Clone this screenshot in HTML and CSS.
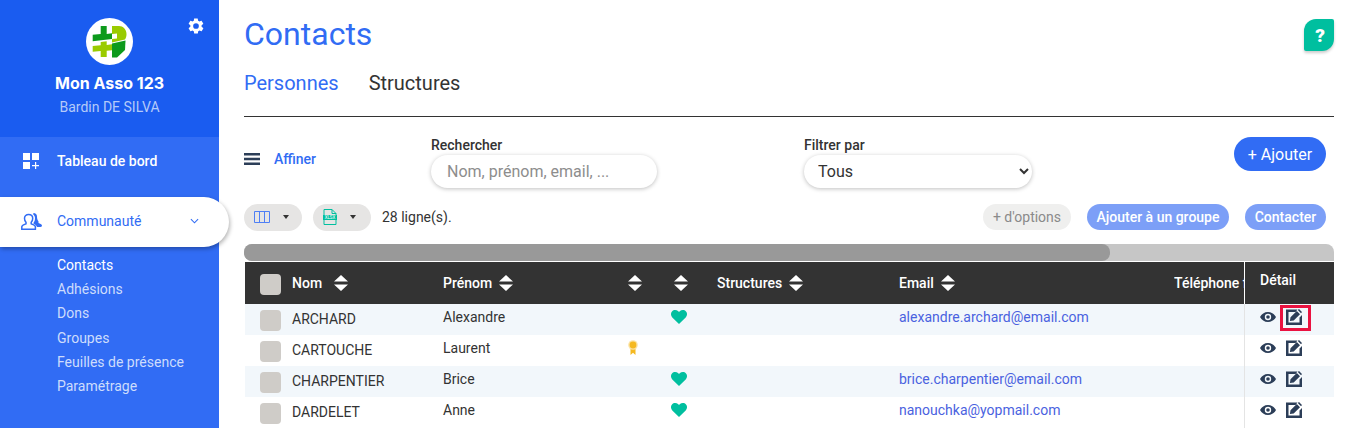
FILE: index.html
```html
<!DOCTYPE html>
<html lang="fr">
<head>
<meta charset="utf-8">
<title>Contacts</title>
<link rel="stylesheet" href="styles.css">
</head>
<body>
<svg class="defs" width="0" height="0" aria-hidden="true">
  <symbol id="sort" viewBox="0 0 14 16"><path d="M7 0l7 6.600H0zM7 16L0 9.400h14z" fill="currentColor"/></symbol>
  <symbol id="heart" viewBox="0 0 16 14"><path d="M8 14L1.300 7.400C-.4 5.600-.4 3 1 1.400 2.600-.4 5.400-.4 7 1.100l1 1 1-1c1.600-1.500 4.400-1.500 6 .3 1.400 1.600 1.400 4.200-.3 6z" fill="#00bf9f"/></symbol>
  <symbol id="eye" viewBox="0 0 16 12"><path fill-rule="evenodd" d="M8 1C4.400 1 1.500 3.100 0 6c1.500 2.900 4.400 5 8 5s6.500-2.100 8-5c-1.500-2.900-4.400-5-8-5zm0 8.200A3.200 3.200 0 1 1 8 2.800a3.200 3.200 0 0 1 0 6.400zM8 4.200a1.800 1.800 0 1 0 0 3.600 1.800 1.800 0 0 0 0-3.600z" fill="#2c3e58"/></symbol>
  <symbol id="edit" viewBox="0 0 16 16"><path d="M0 .5h11.500L9.500 3H2.500v10.500h11V8.500L16 6v10H0z" fill="#2c3e58"/><path d="M4.500 8.300L10.800 2l3.200 3.200-6.300 6.300-3.800.6zM11.800 1L13 0l3 3-1 1.200z" fill="#2c3e58"/></symbol>
</svg>
<div class="app">
  <aside class="sidebar">
    <header class="brand">
      <div class="logo">
        <svg viewBox="0 0 47 47" width="47" height="47">
          <circle cx="23.500" cy="23.500" r="23.500" fill="#fff"/>
          <path d="M14.700 8h6v8l5.300-.8V21l-19.300 2.300v-6.500l8-.8z" fill="#0d9a1c"/>
          <path d="M26 8h7c4 0 7.500 3.500 7.500 8 0 2-.5 4-1.500 5.500l-13 3V21l5-.6v-5l-5 .5z" fill="#9acb00"/>
          <path d="M26 25.500l13.500-3-.5 9.500-8 7.500h-5z" fill="#0d9a1c"/>
          <path d="M14.700 24l6-.7V27l5.300-.8v6l-5.300.5V39h-6v-6l-8 .7V28l8-.8z" fill="#9acb00"/>
        </svg>
      </div>
      <svg class="gear" viewBox="0 0 24 24" width="18" height="18"><path d="M19.400 13c.1-.3.100-.7.100-1s0-.7-.1-1l2.100-1.600c.2-.2.200-.4.100-.6l-2-3.500c-.1-.2-.4-.3-.6-.2l-2.500 1c-.5-.4-1.100-.7-1.700-1l-.4-2.600c0-.3-.2-.5-.5-.5h-4c-.3 0-.5.200-.5.400L9.100 5c-.6.300-1.200.6-1.700 1l-2.500-1c-.2-.1-.5 0-.6.200l-2 3.500c-.1.200-.1.500.1.600L4.500 11c0 .3-.1.700-.1 1s0 .7.1 1l-2.100 1.600c-.2.200-.2.400-.1.600l2 3.500c.1.200.4.300.6.200l2.500-1c.5.400 1.100.7 1.700 1l.4 2.600c0 .2.200.4.500.4h4c.3 0 .5-.2.500-.4l.4-2.600c.6-.3 1.200-.6 1.700-1l2.500 1c.2.100.5 0 .6-.2l2-3.500c.1-.2.100-.5-.1-.6zM12 15.800a3.800 3.800 0 1 1 0-7.600 3.800 3.800 0 0 1 0 7.600z" fill="#fff"/></svg>
      <div class="asso">Mon Asso 123</div>
      <div class="user">Bardin DE SILVA</div>
    </header>
    <nav class="nav">
      <a class="nav-item">
        <svg viewBox="0 0 16 16" width="16" height="16"><path d="M0 0h7v7H0zM9 0h7v7H9zM0 9h7v7H0zM12 9h1.200v3H16v1.200h-2.800V16H12v-2.800H9V12h3z" fill="#fff"/></svg>
        <span>Tableau de bord</span>
      </a>
      <a class="nav-item active">
        <svg viewBox="0 0 21 17" width="21" height="17"><path d="M.8 16.200v-2.400c0-1.600 2.800-2.400 4.200-3V9.300C3.900 8.300 3.500 6.800 3.500 5.200 3.500 3 5.200 1.400 7.600 1.400s4.100 1.600 4.100 3.800c0 1.600-.4 3.100-1.500 4.100v1.500c1.400.6 4.200 1.400 4.200 3v2.400z" fill="none" stroke="#316cf4" stroke-width="1.500"/><path d="M12.500 0c2 0 3.500 1.500 3.500 3.500 0 1.700.3 3.500 1.500 5V10c1.500.5 3 1 3.500 2.500 0 .7-.5 1.500-1.500 1.500h-3.500c-.5-1.700-2-2.700-3.500-3.300V9.800c1-1.100 1.500-2.800 1.500-4.700 0-1.700-1-3.200-2.200-4.100.4-.6 1.100-1 1.700-1z" fill="#316cf4"/></svg>
        <span>Communauté</span>
        <svg class="chev" viewBox="0 0 10 6" width="9" height="6"><path d="M1 1l4 4 4-4" fill="none" stroke="#316cf4" stroke-width="1.200"/></svg>
      </a>
      <ul class="subnav">
        <li class="current">Contacts</li>
        <li>Adhésions</li>
        <li>Dons</li>
        <li>Groupes</li>
        <li>Feuilles de présence</li>
        <li>Paramétrage</li>
      </ul>
    </nav>
  </aside>
  <main class="main">
    <div class="title-row">
      <h1>Contacts</h1>
      <button class="help">?</button>
    </div>
    <div class="tabs">
      <a class="tab on">Personnes</a>
      <a class="tab">Structures</a>
    </div>
    <div class="filters">
      <a class="affiner">
        <svg viewBox="0 0 16 12" width="16" height="12"><path d="M0 0h16v2.400H0zM0 4.800h16v2.400H0zM0 9.600h16V12H0z" fill="#2c3e58"/></svg>
        <span>Affiner</span>
      </a>
      <label class="field search">
        <span>Rechercher</span>
        <input type="text" placeholder="Nom, prénom, email, ...">
      </label>
      <label class="field filter">
        <span>Filtrer par</span>
        <select><option>Tous</option></select>
      </label>
      <button class="add">+ Ajouter</button>
    </div>
    <div class="toolbar">
      <button class="chip">
        <svg viewBox="0 0 16 12" width="16" height="12"><path d="M.5.500h15v11H.5zM5.500.500v11M10.500.500v11" fill="none" stroke="#4f7ff5"/></svg>
        <i class="caret"></i>
      </button>
      <button class="chip">
        <svg viewBox="0 0 14 16" width="14" height="16"><path d="M1 .5h8l4 4v11H1zM9 .5v4h4" fill="none" stroke="#00bf9f"/><rect y="6" width="14" height="5" fill="#00bf9f"/><text x="7" y="10" font-size="4.500" font-family="Roboto, sans-serif" text-anchor="middle" fill="#fff">XLSX</text></svg>
        <i class="caret"></i>
      </button>
      <span class="count">28 ligne(s).</span>
      <div class="actions">
        <button class="pill muted">+ d'options</button>
        <button class="pill light group">Ajouter à un groupe</button>
        <button class="pill light contact">Contacter</button>
      </div>
    </div>
    <div class="scrollbar"><div class="thumb"></div></div>
    <div class="table">
      <div class="row head">
        <div class="cell"><i class="check"></i></div>
        <div class="cell">Nom<svg class="sort wide"><use href="#sort"/></svg></div>
        <div class="cell">Prénom<svg class="sort"><use href="#sort"/></svg></div>
        <div class="cell"><svg class="sort solo"><use href="#sort"/></svg></div>
        <div class="cell"><svg class="sort solo"><use href="#sort"/></svg></div>
        <div class="cell">Structures<svg class="sort"><use href="#sort"/></svg></div>
        <div class="cell">Email<svg class="sort"><use href="#sort"/></svg></div>
        <div class="cell clip">Téléphone fixe</div>
        <div class="cell detail">Détail</div>
      </div>
      <div class="row alt">
        <div class="cell"><i class="check"></i></div>
        <div class="cell low">ARCHARD</div>
        <div class="cell">Alexandre</div>
        <div class="cell"></div>
        <div class="cell"><svg class="heart"><use href="#heart"/></svg></div>
        <div class="cell"></div>
        <div class="cell mail">alexandre.archard@email.com</div>
        <div class="cell"></div>
        <div class="cell detail tools"><svg class="eye"><use href="#eye"/></svg><span class="flag"><svg class="edit"><use href="#edit"/></svg></span></div>
      </div>
      <div class="row">
        <div class="cell"><i class="check"></i></div>
        <div class="cell low">CARTOUCHE</div>
        <div class="cell">Laurent</div>
        <div class="cell">
          <svg class="medal" viewBox="0 0 10 15"><path d="M2.500 8.500h5V15L5 12.800 2.500 15z" fill="#f5b921"/><circle cx="5" cy="5" r="4.800" fill="#fbe3a6"/><circle cx="5" cy="5" r="3.400" fill="#f5b921"/></svg>
        </div>
        <div class="cell"></div>
        <div class="cell"></div>
        <div class="cell mail"></div>
        <div class="cell"></div>
        <div class="cell detail tools"><svg class="eye"><use href="#eye"/></svg><span class="plain"><svg class="edit"><use href="#edit"/></svg></span></div>
      </div>
      <div class="row alt">
        <div class="cell"><i class="check"></i></div>
        <div class="cell low">CHARPENTIER</div>
        <div class="cell">Brice</div>
        <div class="cell"></div>
        <div class="cell"><svg class="heart"><use href="#heart"/></svg></div>
        <div class="cell"></div>
        <div class="cell mail">brice.charpentier@email.com</div>
        <div class="cell"></div>
        <div class="cell detail tools"><svg class="eye"><use href="#eye"/></svg><span class="plain"><svg class="edit"><use href="#edit"/></svg></span></div>
      </div>
      <div class="row">
        <div class="cell"><i class="check"></i></div>
        <div class="cell low">DARDELET</div>
        <div class="cell">Anne</div>
        <div class="cell"></div>
        <div class="cell"><svg class="heart"><use href="#heart"/></svg></div>
        <div class="cell"></div>
        <div class="cell mail">nanouchka@yopmail.com</div>
        <div class="cell"></div>
        <div class="cell detail tools"><svg class="eye"><use href="#eye"/></svg><span class="plain"><svg class="edit"><use href="#edit"/></svg></span></div>
      </div>
    </div>
  </main>
</div>
</body>
</html>
```
FILE: styles.css
```css
* { box-sizing: border-box; }
html, body { margin: 0; height: 428px; overflow: hidden; background: #fff; }
body { font-family: Roboto, "Liberation Sans", sans-serif; color: #333; font-size: 14px; }
.defs { display: block; height: 0; }
button { font-family: inherit; border: 0; cursor: pointer; }

.app { display: flex; height: 428px; }

.sidebar { width: 219px; flex: none; background: #316cf4; color: #fff; }
.brand { position: relative; height: 137px; background: #1a5cf0; display: flex; flex-direction: column; align-items: center; padding-top: 18px; }
.logo { width: 47px; height: 47px; }
.gear { position: absolute; left: 187px; top: 17px; }
.asso { font-family: Inter, sans-serif; font-weight: 700; font-size: 16px; line-height: 20px; margin-top: 8px; }
.user { color: #b4caf9; font-size: 14px; line-height: 18px; margin-top: 5px; }

.nav-item { display: flex; align-items: center; height: 48px; padding-left: 23px; font-size: 14px; }
.nav-item > span { margin-left: 18px; font-weight: 500; }
.nav-item.active { width: 229px; height: 50px; margin-top: 12px; padding-bottom: 2px; background: #fff; color: #316cf4; border-radius: 0 25px 25px 0; padding-left: 21px; box-shadow: 1px 2px 4px rgba(0,0,0,.3); position: relative; }
.nav-item.active > span { margin-left: 15px; font-weight: 400; }
.chev { margin-left: 49px; }
.subnav { list-style: none; margin: 6px 0 0; padding: 0 0 0 57px; color: #cddcfc; font-size: 14px; }
.subnav li { height: 24.200px; line-height: 24px; }
.subnav .current { color: #fff; }

.main { flex: 1; min-width: 0; padding: 0 15px 0 25px; }
.title-row { display: flex; justify-content: space-between; height: 68px; }
h1 { margin: 16px 0 0; font-weight: 400; font-size: 32px; line-height: 37px; color: #316cf4; }
.help { width: 30px; height: 32px; margin: 19px 0 0 0; background: #00bf9f; color: #fff; font-size: 19px; font-weight: 900; border-radius: 12px 2px 12px 2px; box-shadow: 0 2px 3px rgba(0,0,0,.2); padding: 0 0 0 2px; }
.tabs { display: flex; gap: 30px; height: 49px; border-bottom: 1px solid #333; font-size: 20px; line-height: 30px; }
.tab.on { color: #316cf4; }

.filters { display: flex; align-items: flex-start; height: 87px; }
.affiner { display: flex; align-items: center; margin-top: 34px; font-weight: 500; color: #316cf4; width: 187px; font-size: 14px; }
.affiner span { margin-left: 14px; }
.field { display: flex; flex-direction: column; }
.field > span { font-weight: 500; font-size: 14px; line-height: 18px; margin-top: 19px; margin-bottom: 1px; }
.search { width: 373px; }
.search input { width: 226px; height: 33px; border: 0; border-radius: 17px; padding: 0 16px; box-shadow: 0 1px 4px rgba(0,0,0,.25); font: 16px Roboto, sans-serif; color: #333; outline: 0; }
.search input::placeholder { color: #8d8d8d; opacity: 1; }
.filter select { width: 228px; height: 33px; border: 0; border-radius: 17px; padding: 0 10px; background: #fff; box-shadow: 0 1px 4px rgba(0,0,0,.25); font: 16px Roboto, sans-serif; color: #333; outline: 0; }
.filter { width: 430px; }
.add { margin-top: 20px; width: 92px; height: 34px; border-radius: 17px; background: #316cf4; color: #fff; font-size: 16px; padding: 0; flex: none; }

.toolbar { display: flex; align-items: center; height: 26px; }
.chip { width: 58px; height: 27px; border-radius: 14px; background: #e6e5e4; display: flex; align-items: center; padding: 0 0 0 10px; margin-right: 11px; justify-content: flex-start; }
.chip .caret { margin-left: 13px; }
.caret { width: 0; height: 0; border-left: 3px solid transparent; border-right: 3px solid transparent; border-top: 4px solid #333; }
.count { font-size: 14px; }
.actions { margin-left: auto; margin-right: 8px; display: flex; gap: 16px; }
.pill { height: 26px; border-radius: 13px; font-size: 14px; padding: 0; color: #fff; font-weight: 500; }
.pill.light { background: #7c9ff7; }
.pill.group { width: 142px; }
.pill.contact { width: 81px; }
.pill.muted { width: 88px; background: #efefee; color: #8a8a8a; font-weight: 400; }

.scrollbar { margin-top: 14px; height: 17px; border-radius: 8px 8px 0 8px; background: #c6c6c6; }
.thumb { width: 866px; height: 17px; border-radius: 8px; background: #999; }

.table { margin-left: 1px; margin-top: 1px; }
.row { display: grid; grid-template-columns: 47px 151px 182px 46px 46px 182px 275px 70px 90px; height: 31px; align-items: center; }
.row.head { height: 42px; background: #333; color: #fff; font-weight: 500; }
.row.alt { background: #f2f7fb; }
.cell { display: flex; align-items: center; height: 100%; white-space: nowrap; min-width: 0; padding-bottom: 6px; }
.row.head .cell { padding-bottom: 0; }
.cell.low { padding-bottom: 2px; }
.cell:first-child { padding: 2px 0 0 15px; }
.check { display: block; width: 21px; height: 21px; border-radius: 4px; background: #cfccc8; }
.sort { width: 14px; height: 16px; margin-left: 7px; color: #fff; }
.sort.wide { margin-left: 12px; }
.sort.solo { margin-left: 3px; }
.clip { overflow: hidden; }
.detail { border-left: 1px solid #e4e4e4; padding-left: 15px; background: inherit; }
.row.head .detail { border-left-color: #fff; padding-bottom: 6px; }
.tools { gap: 10px; padding-bottom: 5px; }
.eye { width: 16px; height: 12px; }
.edit { width: 16px; height: 16px; display: block; }
.plain { display: block; }
.flag { display: block; position: relative; }
.flag::after { content: ""; position: absolute; left: -6px; right: -9px; top: -4px; bottom: -6px; border: 3px solid #ea1240; }
.mail { color: #4a62e0; }
.heart { width: 16px; height: 14px; }
.medal { width: 10px; height: 15px; margin-left: 3px; }
```
